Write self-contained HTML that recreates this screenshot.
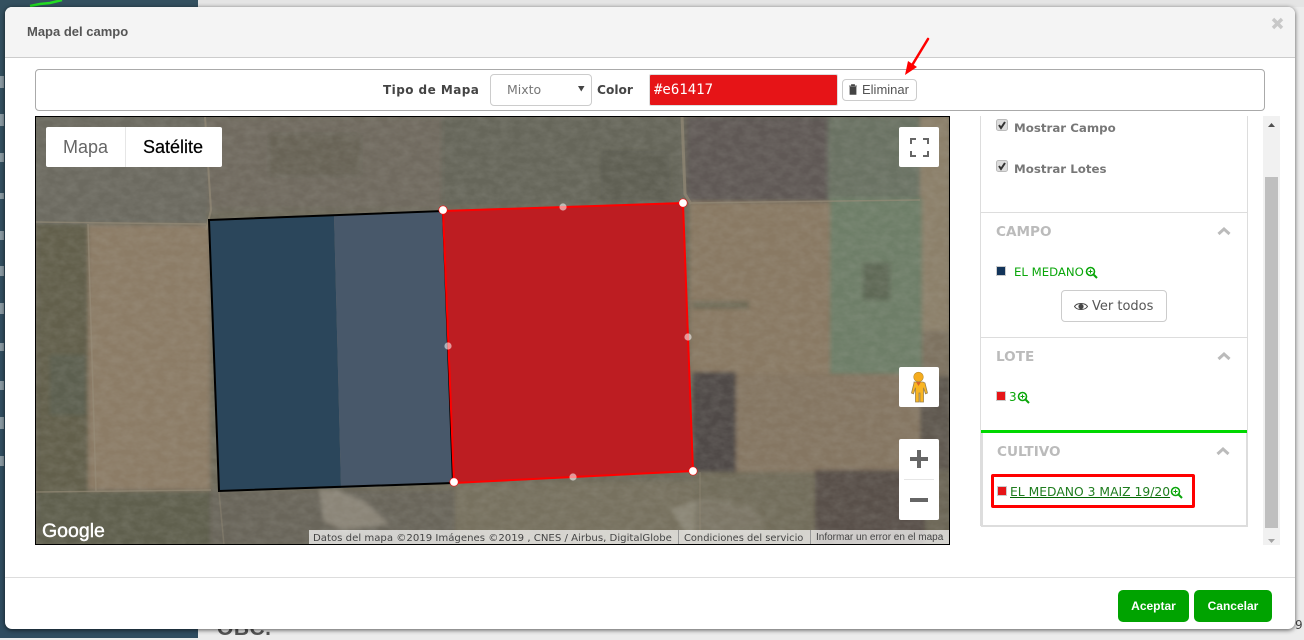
<!DOCTYPE html>
<html lang="es"><head><meta charset="utf-8"><title>Mapa del campo</title>
<style>
*{box-sizing:border-box}
html,body{margin:0;padding:0}
body{width:1304px;height:638px;overflow:hidden;position:relative;background:#ececec;font-family:"DejaVu Sans","Liberation Sans",sans-serif}
.a{position:absolute}
.t{position:absolute;white-space:nowrap;line-height:16px}
.btn{position:absolute;background:#fff;border:1px solid #ccc;border-radius:4px}
.gbtn{position:absolute;background:#00a300;border-radius:5px;color:#fff;text-align:center;font:bold 12px/32px "Liberation Sans",sans-serif}
.ctl{position:absolute;background:#fff;border-radius:2px}
.sec{color:#bbb;font-weight:bold;font-size:13.6px}
.lnk{color:#0aa60a;font-size:11.7px}
.ic{position:absolute;width:4px;left:0;background:#aab4ba;opacity:.75}
</style></head><body>
<div class="a" style="left:0;top:0;width:198px;height:638px;background:linear-gradient(#34505f,#2f4c60)"></div>
<svg class="a" style="left:0;top:0" width="80" height="10"><path d="M30 6l10-2 10-1 12-3" stroke="#22dd22" stroke-width="2.500" fill="none"/></svg>
<div class="a" style="left:198px;top:0;width:1106px;height:7px;background:#e4e4e4"></div>
<div class="ic" style="top:76px;height:12px"></div>
<div class="ic" style="top:114px;height:12px"></div>
<div class="ic" style="top:153px;height:9px"></div>
<div class="ic" style="top:193px;height:6px"></div>
<div class="ic" style="top:231px;height:9px"></div>
<div class="ic" style="top:266px;height:10px"></div>
<div class="ic" style="top:303px;height:11px"></div>
<div class="ic" style="top:343px;height:8px"></div>
<div class="ic" style="top:381px;height:9px"></div>
<div class="ic" style="top:417px;height:12px"></div>
<div class="ic" style="top:456px;height:10px"></div>
<div class="t" style="left:217px;top:619px;font:bold 21px/20px 'Liberation Sans',sans-serif;color:#555;letter-spacing:.5px">OBC.</div>
<div class="t" style="left:1295px;top:617px;font-size:12px;color:#444">9</div>

<!-- modal -->
<div class="a" style="left:5px;top:7px;width:1290px;height:622px;background:#fff;border-radius:7px;box-shadow:0 1px 5px rgba(0,0,0,.65);overflow:hidden">
  <div class="a" style="left:0;top:0;width:1290px;height:51px;background:#f4f4f4;border-bottom:1px solid #ccc"></div>
  <div class="a" style="left:0;top:570px;width:1290px;height:1px;background:#ddd"></div>
</div>
<div class="t" style="left:27px;top:24px;font-weight:bold;font-size:13px;color:#555;font-family:'Liberation Sans',sans-serif">Mapa del campo</div>
<svg class="a" style="left:1271px;top:17px" width="13" height="13"><path d="M2 2l9 9M11 2l-9 9" stroke="#c8c8c8" stroke-width="3.400"/></svg>

<!-- toolbar -->
<div class="a" style="left:35px;top:69px;width:1230px;height:42px;border:1px solid #aaa;border-radius:4px"></div>
<div class="t" style="left:383px;top:82px;font-weight:bold;font-size:12px;letter-spacing:.45px;color:#444">Tipo de Mapa</div>
<div class="btn" style="left:490px;top:74px;width:102px;height:32px"></div>
<div class="t" style="left:507px;top:82px;font-size:12.500px;color:#777">Mixto</div>
<svg class="a" style="left:578px;top:86px" width="7" height="6"><path d="M0 0h6.500L3.250 5.500z" fill="#444"/></svg>
<div class="t" style="left:597px;top:82px;font-weight:bold;font-size:12.200px;color:#444">Color</div>
<div class="a" style="left:649px;top:74px;width:189px;height:32px;background:#e61417;border-radius:2px;border:1px solid #ddd"></div>
<div class="t" style="left:654px;top:82px;font-size:14px;color:#fff;font-family:'DejaVu Sans Mono',monospace">#e61417</div>
<div class="btn" style="left:842px;top:79px;width:75px;height:22px"></div>
<svg class="a" style="left:848px;top:84px" width="10" height="11"><path d="M1 2h8M3.500 2V.7h3V2M2 3v7.400h6V3z" fill="#444" stroke="#444" stroke-width=".8"/></svg>
<div class="t" style="left:862px;top:82px;font-size:13px;color:#555;font-family:'Liberation Sans',sans-serif">Eliminar</div>
<svg class="a" style="left:895px;top:30px" width="45" height="50"><path d="M33 9L16 37" stroke="#f00" stroke-width="2.500" stroke-linecap="round"/><path d="M10 45l12-8-9-6z" fill="#f00"/></svg>

<!-- map -->
<svg class="a" style="left:35px;top:116px" width="915" height="429" viewBox="35 116 915 429">
  <defs>
    <filter id="b"><feGaussianBlur stdDeviation="2"/></filter>
    <filter id="n" x="0" y="0" width="100%" height="100%"><feTurbulence type="fractalNoise" baseFrequency="0.09 0.14" numOctaves="3" seed="6"/><feColorMatrix values="0 0 0 0 0.5 0 0 0 0 0.5 0 0 0 0 0.45 1.400 0 0 0 -0.4"/></filter>
    <clipPath id="c"><rect x="36" y="117" width="913" height="427"/></clipPath>
  </defs>
  <g clip-path="url(#c)">
    <rect x="35" y="116" width="915" height="429" fill="#6e6a5a"/>
    <g filter="url(#b)">
      <rect x="35" y="116" width="172" height="108" fill="#6c6b60"/>
      <rect x="207" y="116" width="235" height="95" fill="#706b5e"/>
      <rect x="270" y="135" width="90" height="40" fill="#625e54" opacity=".6"/>
      <rect x="442" y="116" width="242" height="90" fill="#66665a"/>
      <rect x="600" y="150" width="70" height="50" fill="#5f5e52"/>
      <rect x="686" y="116" width="142" height="85" fill="#5e5954"/>
      <rect x="828" y="116" width="92" height="84" fill="#6b7263"/>
      <rect x="920" y="116" width="30" height="215" fill="#8c806a"/>
      <rect x="36" y="224" width="52" height="270" fill="#625f4c"/>
      <rect x="50" y="355" width="36" height="60" fill="#5a5e52" opacity=".7"/>
      <rect x="88" y="225" width="122" height="265" fill="#8c7c66"/>
      <rect x="690" y="202" width="140" height="172" fill="#897963"/>
      <rect x="692" y="301" width="57" height="8" fill="#6f6a56"/>
      <rect x="830" y="198" width="92" height="178" fill="#6e7e68"/>
      <rect x="863" y="263" width="27" height="37" fill="#59614f" opacity=".7"/>
      <rect x="922" y="331" width="28" height="45" fill="#7d7260"/>
      <rect x="695" y="374" width="225" height="98" fill="#857662"/>
      <rect x="693" y="372" width="43" height="100" fill="#4f4a46"/>
      <rect x="920" y="376" width="30" height="100" fill="#5f5850"/>
      <rect x="36" y="492" width="175" height="53" fill="#5f5e4e"/>
      <rect x="210" y="490" width="245" height="55" fill="#69655a"/>
      <path d="M319 490h18l28 12 24 22-45 6-20-8z" fill="#a19b8c" opacity=".6"/>
      <rect x="455" y="482" width="240" height="63" fill="#77715f"/>
      <path d="M670 510l35-14 50 10 12 20-40 10-40-4z" fill="#9c9888" opacity=".55"/>
      <rect x="695" y="472" width="120" height="73" fill="#756e5c" opacity=".6"/>
      <rect x="815" y="470" width="110" height="75" fill="#594f4a"/>
      <rect x="925" y="470" width="25" height="75" fill="#6c6656"/>
    </g>
    <rect x="35" y="116" width="915" height="429" filter="url(#n)" opacity=".18"/>
    <g stroke="#968c78" fill="none" opacity=".65">
      <path d="M205 116l6 94-5 20" stroke-width="2"/>
      <path d="M682 116l3 78 6 10" stroke-width="3"/>
      <path d="M36 222l170 2" stroke-width="1.500"/>
      <path d="M690 203l230-3" stroke-width="1.500"/>
      <path d="M88 224l8 268M36 492l175-2" stroke-width="1.500"/>
      <path d="M219 492l5 53M700 472v73" stroke-width="1.500" opacity=".6"/>
    </g>
    <path d="M209 220L334 215 341 488 219 491z" fill="#2b465b"/>
    <path d="M334 215L443 211 453 483 341 488z" fill="#48586a"/>
    <path d="M209 220L443 211 453 483 219 491z" fill="none" stroke="#000" stroke-width="2"/>
    <path d="M443 211L683 203 693 471 454 483z" fill="#bd1d22" stroke="#f00" stroke-width="2"/>
    <g fill="#fff" fill-opacity=".55"><circle cx="563" cy="207" r="3.600"/><circle cx="688" cy="337" r="3.600"/><circle cx="573" cy="477" r="3.600"/><circle cx="448" cy="346" r="3.600"/></g>
    <g fill="#fff" stroke="#f00" stroke-width=".6"><circle cx="443" cy="210" r="4.200"/><circle cx="683" cy="203" r="4.200"/><circle cx="693" cy="471" r="4.200"/><circle cx="454" cy="482" r="4.200"/></g>
  </g>
  <rect x="35.500" y="116.500" width="914" height="428" fill="none" stroke="#000"/>
  <rect x="309" y="530" width="640" height="14" fill="#fff" opacity=".7"/>
  <path d="M678.500 530v14M810.500 530v14" stroke="#999"/>
</svg>
<div class="t" style="left:313px;top:531px;font-size:10.150px;line-height:15px;color:#444">Datos del mapa ©2019 Imágenes ©2019 , CNES / Airbus, DigitalGlobe</div>
<div class="t" style="left:684px;top:531px;font-size:9.900px;line-height:15px;color:#444">Condiciones del servicio</div>
<div class="t" style="left:816px;top:530px;font-size:10px;line-height:15px;color:#444;font-family:'Liberation Sans',sans-serif">Informar un error en el mapa</div>
<div class="t" style="left:42px;top:520px;font:19.500px/22px 'Liberation Sans',sans-serif;color:#fff;-webkit-text-stroke:.4px #fff">Google</div>

<div class="ctl" style="left:46px;top:127px;width:176px;height:40px"></div>
<div class="a" style="left:125px;top:127px;width:1px;height:40px;background:#e6e6e6"></div>
<div class="t" style="left:63px;top:136px;font:18px/22px 'Liberation Sans',sans-serif;color:#666">Mapa</div>
<div class="t" style="left:143px;top:136px;font:18px/22px 'Liberation Sans',sans-serif;color:#000;-webkit-text-stroke:.2px #000">Satélite</div>
<div class="ctl" style="left:899px;top:127px;width:40px;height:40px"></div>
<svg class="a" style="left:899px;top:127px" width="40" height="40"><path d="M12 17v-5h5M24 12h5v5M29 24v5h-5M17 29h-5v-5" fill="none" stroke="#666" stroke-width="2"/></svg>
<div class="ctl" style="left:899px;top:367px;width:40px;height:40px"></div>
<svg class="a" style="left:899px;top:367px" width="40" height="40"><circle cx="19.500" cy="10" r="4.800" fill="#f5ac1d" stroke="#b98a2a" stroke-width=".6"/><path d="M15 15h9l2 1 2.500 10-2 .8-2-6v14.200h-3.500v-9h-1v9h-3.500V20.800l-2 6-2-.8 2.500-10z" fill="#f9b522" stroke="#9a8250" stroke-width=".8"/><path d="M17 15h5l-2.500 4z" fill="#d8642a"/></svg>
<div class="ctl" style="left:899px;top:439px;width:40px;height:81px"></div>
<div class="a" style="left:904px;top:479px;width:30px;height:1px;background:#e6e6e6"></div>
<svg class="a" style="left:899px;top:439px" width="40" height="81"><path d="M11 20h18M20 11v18M11 61h18" stroke="#666" stroke-width="4" fill="none"/></svg>

<!-- side panel -->
<div class="a" style="left:980px;top:116px;width:1px;height:410px;background:#ddd"></div>
<div class="a" style="left:1247px;top:116px;width:1px;height:410px;background:#ddd"></div>
<div class="a" style="left:980px;top:212px;width:268px;height:1px;background:#ddd"></div>
<div class="a" style="left:980px;top:337px;width:268px;height:1px;background:#ddd"></div>
<div class="a" style="left:981px;top:430px;width:266px;height:3px;background:#00d800"></div>
<div class="a" style="left:981px;top:433px;width:2px;height:94px;background:#ddd"></div>
<div class="a" style="left:1246px;top:433px;width:2px;height:94px;background:#ddd"></div>
<div class="a" style="left:981px;top:525px;width:267px;height:2px;background:#ddd"></div>

<svg class="a" style="left:996px;top:119px" width="12" height="54"><g fill="#ddd" stroke="#bbb"><rect x=".5" y=".5" width="11" height="11" rx="2"/><rect x=".5" y="41.500" width="11" height="11" rx="2"/></g><path d="M3 6l2 3 4-6M3 47l2 3 4-6" fill="none" stroke="#333" stroke-width="2"/></svg>
<div class="t" style="left:1014px;top:120px;font-weight:bold;font-size:11.800px;color:#777">Mostrar Campo</div>
<div class="t" style="left:1014px;top:161px;font-weight:bold;font-size:11.800px;color:#777">Mostrar Lotes</div>

<div class="t sec" style="left:996px;top:224px">CAMPO</div>
<div class="t sec" style="left:996px;top:349px">LOTE</div>
<div class="t sec" style="left:997px;top:444px">CULTIVO</div>
<svg class="a" style="left:1217px;top:226px" width="14" height="10"><path d="M1.500 8L7 3l5.500 5" fill="none" stroke="#bbb" stroke-width="3"/></svg>
<svg class="a" style="left:1217px;top:351px" width="14" height="10"><path d="M1.500 8L7 3l5.500 5" fill="none" stroke="#bbb" stroke-width="3"/></svg>
<svg class="a" style="left:1216px;top:446px" width="14" height="10"><path d="M1.500 8L7 3l5.500 5" fill="none" stroke="#bbb" stroke-width="3"/></svg>

<div class="a" style="left:996px;top:266px;width:10px;height:10px;background:#12345a;border:1px solid #ccc"></div>
<div class="t lnk" style="left:1014px;top:264px">EL MEDANO</div>
<svg class="a" style="left:1085px;top:266px" width="13" height="13"><circle cx="5.500" cy="5.500" r="4" fill="none" stroke="#0aa60a" stroke-width="1.600"/><path d="M8.500 8.500l3.500 3.500" stroke="#0aa60a" stroke-width="2"/><path d="M3.500 5.500h4M5.500 3.500v4" stroke="#0aa60a"/></svg>
<div class="btn" style="left:1061px;top:290px;width:106px;height:32px"></div>
<svg class="a" style="left:1074px;top:301px" width="14" height="11"><path d="M.5 5.500C3 1.500 11 1.500 13.500 5.500 11 9.500 3 9.500 .5 5.500z" fill="none" stroke="#444"/><circle cx="7" cy="5.500" r="2.600" fill="#444"/></svg>
<div class="t" style="left:1092px;top:299px;font-size:13px;color:#555">Ver todos</div>

<div class="a" style="left:996px;top:391px;width:10px;height:10px;background:#e61417;border:1px solid #ccc"></div>
<div class="t lnk" style="left:1009px;top:389px;font-size:12px">3</div>
<svg class="a" style="left:1017px;top:391px" width="13" height="13"><circle cx="5.500" cy="5.500" r="4" fill="none" stroke="#0aa60a" stroke-width="1.600"/><path d="M8.500 8.500l3.500 3.500" stroke="#0aa60a" stroke-width="2"/><path d="M3.500 5.500h4M5.500 3.500v4" stroke="#0aa60a"/></svg>

<div class="a" style="left:991px;top:474px;width:204px;height:34px;border:3px solid #f00;border-radius:2px"></div>
<div class="a" style="left:997px;top:486px;width:10px;height:10px;background:#e61417;border:1px solid #ccc"></div>
<div class="t" style="left:1010px;top:484px;font-size:12.350px;color:#1f7d1f;text-decoration:underline;text-decoration-color:#060">EL MEDANO 3 MAIZ 19/20</div>
<svg class="a" style="left:1170px;top:486px" width="13" height="13"><circle cx="5.500" cy="5.500" r="4" fill="none" stroke="#0aa60a" stroke-width="1.600"/><path d="M8.500 8.500l3.500 3.500" stroke="#0aa60a" stroke-width="2"/><path d="M3.500 5.500h4M5.500 3.500v4" stroke="#0aa60a"/></svg>

<!-- scrollbar -->
<div class="a" style="left:1263px;top:116px;width:17px;height:429px;background:#f1f1f1"></div>
<div class="a" style="left:1265px;top:177px;width:13px;height:351px;background:#bfbfbf"></div>
<svg class="a" style="left:1263px;top:116px" width="17" height="429"><path d="M5 11l3.500-4 3.500 4z" fill="#505050"/><path d="M5 423l3.500 4 3.500-4z" fill="#a3a3a3"/></svg>

<div class="gbtn" style="left:1118px;top:590px;width:71px;height:32px">Aceptar</div>
<div class="gbtn" style="left:1194px;top:590px;width:78px;height:32px">Cancelar</div>
</body></html>
